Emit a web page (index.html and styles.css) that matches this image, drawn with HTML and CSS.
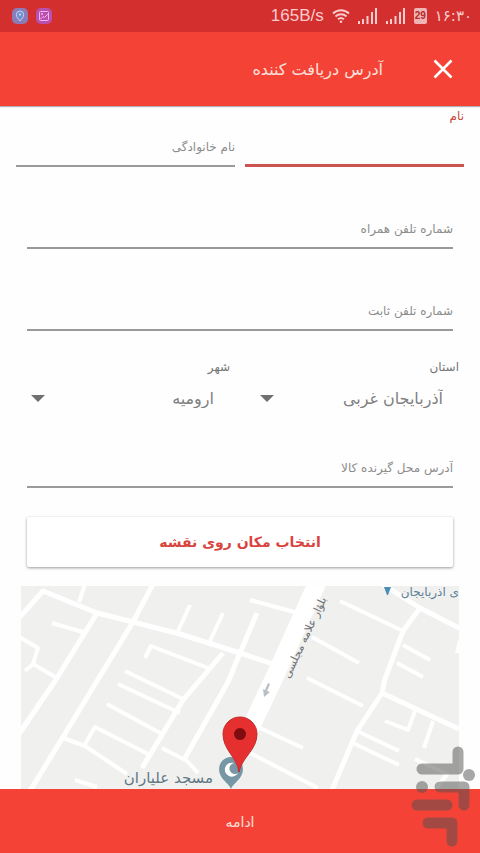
FILE: index.html
```
<!DOCTYPE html>
<html lang="fa" dir="rtl">
<head>
    <meta charset="UTF-8">
    <meta name="viewport" content="width=device-width, initial-scale=1.0">
    <title>آدرس دریافت کننده</title>
    <link rel="stylesheet" href="styles.css">
</head>
<body>
    <div class="status-bar">
        <div class="status-group">
            <svg width="16" height="16" viewBox="0 0 16 16">
                <rect width="16" height="16" rx="5" fill="#8b7cb8"/>
                <path d="M8 13C6 10.500 4.300 9 4.300 6.700a3.700 3.700 0 0 1 7.400 0C11.700 9 10 10.500 8 13z" fill="#6f8fd0" stroke="#c3d3f5"/>
                <circle cx="8" cy="6.500" r="1" fill="#dfe8ff"/>
            </svg>
            <svg width="16" height="16" viewBox="0 0 16 16">
                <rect width="16" height="16" rx="5" fill="#bb4fb0"/>
                <rect x="3.500" y="3.500" width="9" height="9" rx="1" fill="none" stroke="#efb5ee"/>
                <path d="M4 11.500l3-3 1.500 1L12 6" fill="none" stroke="#efb5ee"/>
                <circle cx="6" cy="6" r="1" fill="#efb5ee"/>
            </svg>
        </div>
        <div class="status-group">
            <span class="speed">165B/s</span>
            <svg class="wifi" width="18" height="16" viewBox="0 0 18 16" fill="none" stroke="#f8cccc" stroke-width="1.900">
                <path d="M1 5.500a11.500 11.500 0 0 1 16 0M3.500 8.500a8 8 0 0 1 11 0M6 11.300a4.500 4.500 0 0 1 6 0"/>
                <circle cx="9" cy="13.700" r="1.300" fill="#f8cccc" stroke="none"/>
            </svg>
            <svg width="20" height="16" viewBox="0 0 20 16" fill="#f8cccc">
                <path d="M0 13h2v3H0zM4 11h2v5H4zM8.500 8h2v8h-2zM13 4h2v12h-2zM17 0h2v16h-2z"/>
            </svg>
            <svg width="20" height="16" viewBox="0 0 20 16" fill="#f8cccc">
                <path d="M0 13h2v3H0zM4 11h2v5H4zM8.500 8h2v8h-2zM13 4h2v12h-2zM17 0h2v16h-2z"/>
            </svg>
            <span class="battery">29</span>
            <span class="clock">۱۶:۳۰</span>
        </div>
    </div>

    <header class="toolbar">
        <button class="close" type="button" aria-label="بستن">
            <svg width="20" height="20" viewBox="0 0 20 20" stroke="#fff" stroke-width="2.600">
                <path d="M1.500 1.500l17 17M18.500 1.500l-17 17"/>
            </svg>
        </button>
        <h1>آدرس دریافت کننده</h1>
    </header>

    <form class="address-form">
        <div class="name-row">
            <div class="field active">
                <label for="nam">نام</label>
                <input type="text" id="nam">
            </div>
            <div class="field">
                <input type="text" id="family" placeholder="نام خانوادگی" aria-label="نام خانوادگی">
            </div>
        </div>
        <div class="field wide">
            <input type="tel" id="mobile" dir="rtl" placeholder="شماره تلفن همراه" aria-label="شماره تلفن همراه">
        </div>
        <div class="field wide">
            <input type="tel" id="phone" dir="rtl" placeholder="شماره تلفن ثابت" aria-label="شماره تلفن ثابت">
        </div>

        <div class="select-row">
            <div class="select-group">
                <label for="ostan">استان</label>
                <div class="select-box">
                    <select id="ostan">
                        <option>آذربایجان غربی</option>
                    </select>
                </div>
            </div>
            <div class="select-group">
                <label for="shahr">شهر</label>
                <div class="select-box">
                    <select id="shahr">
                        <option>ارومیه</option>
                    </select>
                </div>
            </div>
        </div>

        <div class="field wide address">
            <input type="text" id="address" placeholder="آدرس محل گیرنده کالا" aria-label="آدرس محل گیرنده کالا">
        </div>

        <button class="map-button" type="button">انتخاب مکان روی نقشه</button>
    </form>

    <div class="map">
        <svg viewBox="21 585 438 203" preserveAspectRatio="xMidYMin slice">
            <g class="roads">
                <path d="M19 617L43 590 97 612 133 621 180 633 240 652 273 663"/>
                <path d="M153 583L133 621 97 680 63 736 30 790M97 612L57 677 19 733"/>
                <path d="M223 652L183 699 142 767M382 692L459 728M382 583L420 607 461 628"/>
                <path d="M420 607L403 630 385 678 382 692 357 730 332 789"/>
                <path d="M257 612L240 652 228 681 185 757"/>
            </g>
            <g class="roads small">
                <path d="M85 583L79 601M52 622L83 631M19 636L38 647 33 663 25 670M33 663L57 677"/>
                <path d="M190 604L178 630M223 612L210 640M145 657L151 645 208 667"/>
                <path d="M125 670L183 698M118 683L180 712M107 703L162 733"/>
                <path d="M85 743L95 726 148 753M63 737L85 745 127 773M162 747L187 760 198 772M75 779L97 786"/>
                <path d="M250 599L298 612M340 600L403 630M403 644L430 659M397 662L423 676"/>
                <path d="M312 636L359 662M307 677L363 705M415 710L408 729 385 720M433 720L424 747"/>
                <path d="M357 730L399 750M353 742L399 764M260 727L303 747M250 752L318 787"/>
                <path d="M415 758L447 773 435 789M460 640L457 652"/>
            </g>
            <path class="boulevard" d="M318 580L275 675 242 745"/>
            <path d="M270 683l-3 7 3 1-6 5-1-8 2 1 3-7z" fill="#b9bfc3"/>
            <path d="M384 586h7l-3 8h-1z" fill="#4c8db8"/>
            <text class="place" x="459" y="595" font-size="12">ی اذربایجان</text>
            <text class="street" font-size="11" text-anchor="middle" transform="translate(308 638) rotate(-65)">بلؤار علامه مجلسی</text>
            <text class="mosque" x="213" y="782" font-size="15">مسجد علیاران</text>
            <path d="M231 788c-2-6-12-10-12-20a12 12 0 0 1 24 0c0 10-10 14-12 20z" fill="#7897a5"/>
            <path d="M234 762a7 7 0 1 0 4 10a5.500 5.500 0 1 1-4-10z" fill="#fff"/>
            <path d="M239 771c-2-15-16-22-16-38a17 17 0 0 1 34 0c0 16-15 23-18 38z" fill="#e5302f" stroke="#c42a2a" stroke-width="1"/>
            <circle cx="240" cy="733" r="6" fill="#7d0d10"/>
        </svg>
    </div>

    <button class="continue" type="button">ادامه</button>

    <svg class="watermark" width="66" height="100" viewBox="0 0 66 100" aria-hidden="true">
        <g fill="none" stroke="#505050" stroke-width="11" stroke-linecap="round" stroke-linejoin="round">
            <path d="M11 23h36V6"/>
            <path d="M29 41h24v18"/>
            <path d="M6 59h30"/>
            <path d="M17 77h24v18"/>
        </g>
        <circle cx="58" cy="29" r="6" fill="#505050"/>
        <circle cx="11" cy="41" r="6" fill="#505050"/>
    </svg>
</body>
</html>
```
FILE: styles.css
```
* {
    box-sizing: border-box;
}
body {
    margin: 0;
    min-height: 100vh;
    display: flex;
    flex-direction: column;
    background: #fefefe;
    font-family: "DejaVu Sans", sans-serif;
    color: #757575;
}
input, select, button {
    font-family: inherit;
}

/* status bar */
.status-bar {
    direction: ltr;
    display: flex;
    justify-content: space-between;
    align-items: center;
    height: 32px;
    padding: 0 8px 0 12px;
    background: #d32f2f;
    color: #f8cccc;
}
.status-group {
    display: flex;
    align-items: center;
    gap: 8px;
}
.speed {
    font: 17px "Liberation Sans", sans-serif;
}
.battery {
    width: 13px;
    height: 16px;
    border-radius: 2px;
    background: #f0b4b4;
    color: #b52a2a;
    font: bold 10px/16px "Liberation Sans", sans-serif;
    text-align: center;
}
.clock {
    font-size: 15px;
}

/* header */
.toolbar {
    display: flex;
    align-items: center;
    gap: 50px;
    height: 74px;
    padding: 0 27px;
    background: #f44336;
    box-shadow: 0 1px 1px rgba(0, 0, 0, 0.3);
}
.toolbar h1 {
    margin: 0;
    font-size: 16px;
    font-weight: normal;
    color: #fde0dc;
}
.close {
    display: flex;
    padding: 0;
    border: none;
    background: none;
}

/* form */
.name-row {
    display: flex;
    gap: 10px;
    padding: 0 16px;
}
.name-row .field {
    flex: 1;
}
.field {
    display: flex;
    flex-direction: column;
    justify-content: flex-end;
    height: 61px;
}
.field label {
    height: 21px;
    font-size: 12px;
    line-height: 20px;
    color: #c9463f;
}
.field input {
    width: 100%;
    height: 40px;
    padding: 2px 0 0;
    border: none;
    border-bottom: 2px solid #9a9a9a;
    background: none;
    font-size: 12px;
    outline: none;
}
.field input::placeholder {
    color: #8c8c8c;
    opacity: 1;
}
.field.active input {
    border-bottom: 3px solid #cb5352;
}
.wide {
    margin: 21px 27px 0;
}
.select-row {
    display: flex;
    gap: 20px;
    margin-top: 25px;
    padding: 0 21px;
}
.select-group {
    flex: 1;
}
.select-group label {
    display: block;
    font-size: 12px;
    line-height: 22px;
}
.select-box {
    position: relative;
}
.select-box select {
    width: 100%;
    height: 40px;
    padding: 0 16px;
    border: none;
    background: none;
    color: #808080;
    font-size: 16px;
    appearance: none;
}
.select-box::after {
    content: "";
    position: absolute;
    left: 10px;
    top: 17px;
    border: 7px solid transparent;
    border-top-color: #707070;
    border-bottom: none;
    pointer-events: none;
}
.address {
    margin-top: 9px;
}
.map-button {
    display: block;
    width: calc(100% - 54px);
    height: 50px;
    margin: 29px 27px 19px;
    border: none;
    border-radius: 2px;
    background: #fff;
    box-shadow: 0 1px 3px rgba(0, 0, 0, 0.4);
    color: #d8453e;
    font-size: 14px;
    font-weight: bold;
}

/* map */
.map {
    flex: 1;
    min-height: 200px;
    margin: 0 21px;
    background: #f0f0ef;
    overflow: hidden;
}
.map svg {
    display: block;
    width: 100%;
    height: 100%;
}
.roads path {
    fill: none;
    stroke: #fff;
    stroke-width: 5;
    stroke-linejoin: round;
}
.roads.small path {
    stroke-width: 4;
}
.boulevard {
    fill: none;
    stroke: #fff;
    stroke-width: 18;
}
.place {
    fill: #5d8098;
}
.street {
    fill: #6d7175;
}
.mosque {
    fill: #5f7884;
}

.continue {
    flex-shrink: 0;
    height: 65px;
    border: none;
    background: #f44336;
    color: #fde0dc;
    font-size: 14px;
}
.watermark {
    position: fixed;
    right: 3px;
    bottom: 7px;
    overflow: visible;
    opacity: 0.5;
    pointer-events: none;
}
```
